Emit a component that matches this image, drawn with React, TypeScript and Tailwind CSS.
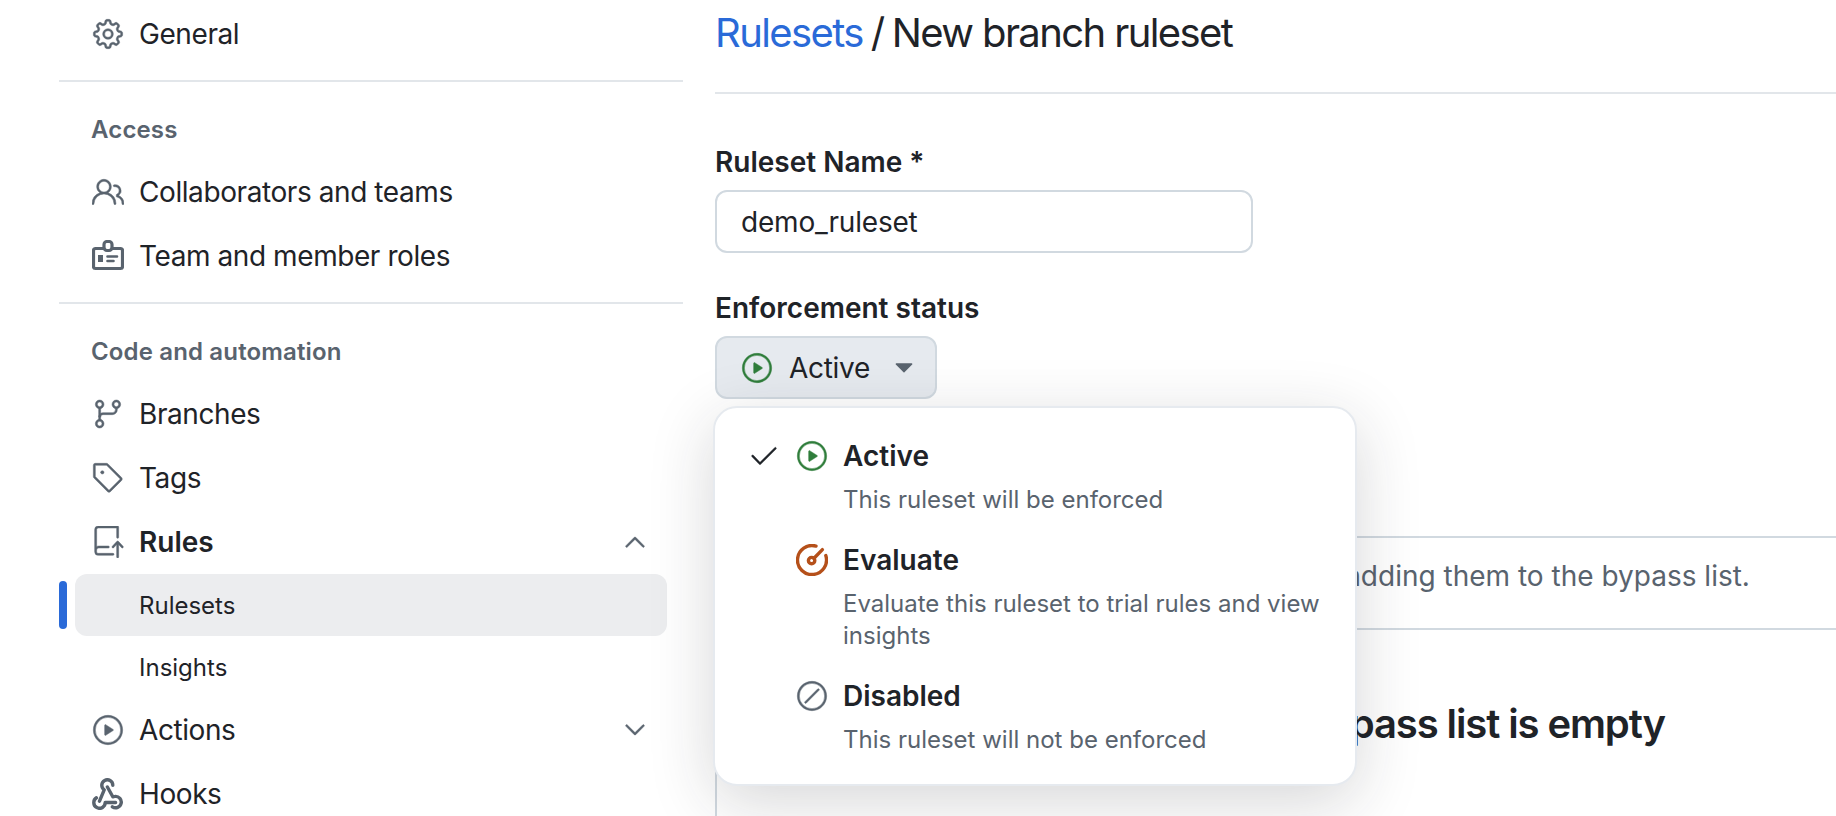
import React from "react";
import {
  GoGear, GoPeople, GoGitBranch, GoTag, GoRepoPush, GoPlay,
  GoChevronUp, GoChevronDown, GoCheck, GoTriangleDown, GoSkip,
} from "react-icons/go";

type IconProps = { size?: number; className?: string };
type IconT = React.ComponentType<IconProps>;

const heavy = (I: IconT): IconT => (p: IconProps) => <I {...p} className={`${p.className ?? ""} stroke-[0.35]`} />;

const Gear = heavy(GoGear);
const People = heavy(GoPeople);
const Branch = heavy(GoGitBranch);
const Tag = heavy(GoTag);
const Push = heavy(GoRepoPush);
const Play = heavy(GoPlay);
const Up = heavy(GoChevronUp);
const Down = heavy(GoChevronDown);
const Skip = heavy(GoSkip);

function GoIdBadge({ size = 32, className }: IconProps) {
  return (
    <svg viewBox="0 0 16 16" width={size} height={size} className={className} fill="none" stroke="currentColor" strokeWidth="1.6" strokeLinecap="round" strokeLinejoin="round">
      <path d="M6 4.25H1.75a1 1 0 0 0-1 1v8a1 1 0 0 0 1 1h12.5a1 1 0 0 0 1-1v-8a1 1 0 0 0-1-1H10" />
      <rect x="6" y="0.75" width="4" height="4.5" rx="1.5" />
      <rect x="3" y="7.5" width="2.5" height="3.5" fill="currentColor" stroke="none" />
      <path d="M7.75 8.25h4.75M7.75 10.5h3" strokeWidth="1.3" />
    </svg>
  );
}

function GoWebhook({ size = 32, className }: IconProps) {
  return (
    <svg viewBox="0 0 16 16" width={size} height={size} className={className} fill="none" stroke="currentColor" strokeWidth="1.7" strokeLinecap="round" strokeLinejoin="round">
      <path d="M10.4 3.6a2.75 2.75 0 1 0-4.3 2.3L3.75 11.6" />
      <path d="M2.2 9.9a2.85 2.85 0 1 0 4.4 2.35h5.2" />
      <path d="M10.2 14.4a2.85 2.85 0 1 0 1.3-5.2c-.4 0-.8.1-1.1.2L7.7 4.5" />
    </svg>
  );
}

function GoMeter({ size = 32, className }: IconProps) {
  return (
    <svg viewBox="0 0 16 16" width={size} height={size} className={className} fill="none" stroke="currentColor" strokeWidth="1.7" strokeLinecap="round" strokeLinejoin="round">
      <path d="M10 1.05A7.25 7.25 0 1 0 14.9 5.8" />
      <circle cx="7.8" cy="8.3" r="1.6" />
      <path d="M9 7.1l4.2-4.3" />
    </svg>
  );
}

function Row({ icon: Icon, label, bold, chevron: Chevron }: { icon: IconT; label: string; bold?: boolean; chevron?: IconT }) {
  return (
    <div className="flex h-[64px] items-center pl-[33px] pr-[32px]">
      <Icon size={32} className="shrink-0 text-[#59636e]" />
      <span className={`ml-[15px] flex-1 text-[28px] ${bold ? "font-semibold tracking-[0px]" : "tracking-[-0.42px]"} text-[#1f2328]`}>{label}</span>
      {Chevron && <Chevron size={32} className="text-[#59636e]" />}
    </div>
  );
}

function Heading({ children }: { children: React.ReactNode }) {
  return <div className="pl-[32px] pt-[32px] pb-[14px] text-[24px] leading-[32px] font-semibold tracking-[0.15px] text-[#59636e]">{children}</div>;
}

function Option({ icon: Icon, color, label, children, checked }: { icon: IconT; color: string; label: string; children: React.ReactNode; checked?: boolean }) {
  return (
    <div className="flex pl-[33px]">
      <div className="flex h-[40px] w-[32px] items-center">{checked && <GoCheck size={32} className="stroke-[0.3] text-[#1f2328]" />}</div>
      <div className="ml-[16px] flex h-[40px] w-[32px] items-center"><Icon size={32} className={color} /></div>
      <div className="ml-[15px] w-[482px]">
        <div className="text-[28px] leading-[40px] font-semibold text-[#1f2328]">{label}</div>
        <div className="mt-[8px] text-[24px] leading-[32px] text-[#59636e]">{children}</div>
      </div>
    </div>
  );
}

export default function App() {
  return (
    <div className="flex h-[816px] w-[1836px] overflow-hidden bg-white font-['Inter',sans-serif]">
      <aside className="ml-[59px] w-[624px] shrink-0 pt-[2px]">
        <Row icon={Gear} label="General" />
        <div className="mt-[14px] h-[2px] bg-[#e2e6ea]" />
        <Heading>Access</Heading>
        <Row icon={People} label="Collaborators and teams" />
        <Row icon={GoIdBadge} label="Team and member roles" />
        <div className="mt-[14px] h-[2px] bg-[#e2e6ea]" />
        <Heading>Code and automation</Heading>
        <Row icon={Branch} label="Branches" />
        <Row icon={Tag} label="Tags" />
        <Row icon={Push} label="Rules" bold chevron={Up} />
        <div className="flex h-[62px] items-center gap-[8px]">
          <div className="h-[48px] w-[8px] rounded-full bg-[#2a6ad8]" />
          <div className="flex h-[62px] w-[592px] items-center rounded-[12px] bg-[#ecedef] pl-[64px] pt-[2px] text-[24px] text-[#1f2328]">Rulesets</div>
        </div>
        <div className="flex h-[62px] items-center pl-[80px] pt-[2px] text-[24px] text-[#1f2328]">Insights</div>
        <Row icon={Play} label="Actions" chevron={Down} />
        <Row icon={GoWebhook} label="Hooks" />
      </aside>

      <main className="relative ml-[32px] w-[1121px] shrink-0">
        <div className="flex h-[94px] items-start border-b-2 border-[#e2e6ea]">
          <h1 className="text-[40px] leading-[66px] tracking-[-1.6px] text-[#1f2328]">
            <span className="text-[#2a6ad8]">Rulesets</span>
            <span className="mx-[8px]">/</span>
            <span>New branch ruleset</span>
          </h1>
        </div>
        <div className="mt-[48px] h-[40px] text-[28px] leading-[40px] font-semibold text-[#1f2328]">Ruleset Name *</div>
        <div className="mt-[8px] flex h-[63px] w-[538px] items-center rounded-[12px] border-2 border-[#d1d9e0] pl-[24px] text-[28px] tracking-[-0.2px] text-[#1f2328]">demo_ruleset</div>
        <div className="mt-[35px] h-[40px] text-[28px] leading-[40px] font-semibold text-[#1f2328]">Enforcement status</div>
        <div className="mt-[8px] flex h-[63px] w-[222px] items-center rounded-[12px] border-2 border-[#d1d9e0] bg-[#e6eaef] pl-[24px] text-[28px] tracking-[-0.3px] text-[#1f2328]">
          <Play size={32} className="text-[#2f7d3b]" />
          <span className="ml-[16px]">Active</span>
          <GoTriangleDown size={32} className="ml-[18px] text-[#59636e]" />
        </div>

        <div className="mt-[137px] h-[400px] w-[1300px] border-2 border-[#d1d9e0]">
          <div className="h-[92px] border-b-2 border-[#d1d9e0] pl-[40px] pt-[18px] text-[28px] leading-[40px] text-[#59636e]">
            Exempt roles and teams from this ruleset by adding them to the bypass list.
          </div>
          <div className="mt-[64px] pl-[585px] text-[40px] leading-[60px] font-semibold tracking-[-1.1px] text-[#1f2328]">Bypass list is empty</div>
        </div>

        <div className="absolute left-[-2px] top-[406px] flex h-[380px] w-[644px] flex-col gap-[24px] rounded-[24px] border-2 border-[#e6eaef] bg-white pt-[28px] shadow-[0_16px_64px_rgba(31,35,40,0.18)]">
          <Option icon={Play} color="text-[#2f7d3b]" label="Active" checked>This ruleset will be enforced</Option>
          <Option icon={GoMeter} color="text-[#b5501a]" label="Evaluate">Evaluate this ruleset to trial rules and view insights</Option>
          <Option icon={Skip} color="text-[#59636e]" label="Disabled">This ruleset will not be enforced</Option>
        </div>
      </main>
    </div>
  );
}
